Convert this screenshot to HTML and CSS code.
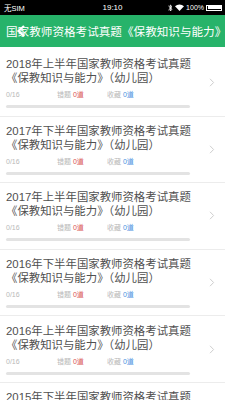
FILE: index.html
```html
<!DOCTYPE html>
<html lang="zh">
<head>
<meta charset="utf-8">
<link rel="stylesheet" href="styles.css">
</head>
<body>
<div class="status">
  <span class="carrier">无SIM</span>
  <span class="time">19:10</span>
  <span class="right">
    <svg class="bt" width="5" height="8" viewBox="0 0 5 8"><path d="M0.5 2 L4 5.3 L2.3 7 L2.3 1 L4 2.7 L0.5 6" fill="none" stroke="#fff" stroke-width="0.9"/></svg>
    <svg class="wifi" width="9" height="7" viewBox="0 0 9 7"><path d="M4.5 7 L0 2.2 A6.5 6.5 0 0 1 9 2.2 Z" fill="#fff"/></svg>
    <span class="pct">100%</span>
    <span class="battery"><span class="fill"></span></span>
  </span>
</div>
<div class="header">
  <span class="htitle">国家教师资格考试真题《保教知识与能力》</span>
  <svg class="back" width="10" height="12" viewBox="0 0 10 12"><path d="M8 1 L2.5 6 L8 11" fill="none" stroke="#fff" stroke-width="2.2"/></svg>
</div>
<div class="list">
  <div class="item">
    <div class="body">
      <div class="title">2018年上半年国家教师资格考试真题《保教知识与能力》（幼儿园）</div>
      <div class="stats"><span class="prog">0/16</span><span class="st">错题 <em class="red">0道</em></span><span class="st">收藏 <em class="blue">0道</em></span></div>
      <div class="bar"></div>
    </div>
    <svg class="chev" width="6" height="9" viewBox="0 0 6 9"><path d="M1 0.8 L4.6 4.5 L1 8.2" fill="none" stroke="#c8c8c8" stroke-width="0.9"/></svg>
  </div>
  <div class="item">
    <div class="body">
      <div class="title">2017年下半年国家教师资格考试真题《保教知识与能力》（幼儿园）</div>
      <div class="stats"><span class="prog">0/16</span><span class="st">错题 <em class="red">0道</em></span><span class="st">收藏 <em class="blue">0道</em></span></div>
      <div class="bar"></div>
    </div>
    <svg class="chev" width="6" height="9" viewBox="0 0 6 9"><path d="M1 0.8 L4.6 4.5 L1 8.2" fill="none" stroke="#c8c8c8" stroke-width="0.9"/></svg>
  </div>
  <div class="item">
    <div class="body">
      <div class="title">2017年上半年国家教师资格考试真题《保教知识与能力》（幼儿园）</div>
      <div class="stats"><span class="prog">0/16</span><span class="st">错题 <em class="red">0道</em></span><span class="st">收藏 <em class="blue">0道</em></span></div>
      <div class="bar"></div>
    </div>
    <svg class="chev" width="6" height="9" viewBox="0 0 6 9"><path d="M1 0.8 L4.6 4.5 L1 8.2" fill="none" stroke="#c8c8c8" stroke-width="0.9"/></svg>
  </div>
  <div class="item">
    <div class="body">
      <div class="title">2016年下半年国家教师资格考试真题《保教知识与能力》（幼儿园）</div>
      <div class="stats"><span class="prog">0/16</span><span class="st">错题 <em class="red">0道</em></span><span class="st">收藏 <em class="blue">0道</em></span></div>
      <div class="bar"></div>
    </div>
    <svg class="chev" width="6" height="9" viewBox="0 0 6 9"><path d="M1 0.8 L4.6 4.5 L1 8.2" fill="none" stroke="#c8c8c8" stroke-width="0.9"/></svg>
  </div>
  <div class="item">
    <div class="body">
      <div class="title">2016年上半年国家教师资格考试真题《保教知识与能力》（幼儿园）</div>
      <div class="stats"><span class="prog">0/16</span><span class="st">错题 <em class="red">0道</em></span><span class="st">收藏 <em class="blue">0道</em></span></div>
      <div class="bar"></div>
    </div>
    <svg class="chev" width="6" height="9" viewBox="0 0 6 9"><path d="M1 0.8 L4.6 4.5 L1 8.2" fill="none" stroke="#c8c8c8" stroke-width="0.9"/></svg>
  </div>
  <div class="item">
    <div class="body">
      <div class="title">2015年下半年国家教师资格考试真题《保教知识与能力》（幼儿园）</div>
      <div class="stats"><span class="prog">0/16</span><span class="st">错题 <em class="red">0道</em></span><span class="st">收藏 <em class="blue">0道</em></span></div>
      <div class="bar"></div>
    </div>
    <svg class="chev" width="6" height="9" viewBox="0 0 6 9"><path d="M1 0.8 L4.6 4.5 L1 8.2" fill="none" stroke="#c8c8c8" stroke-width="0.9"/></svg>
  </div>
</div>
</body>
</html>
```
FILE: styles.css
```css
* { box-sizing: border-box; }
html, body { margin: 0; padding: 0; }
body {
  width: 225px;
  height: 400px;
  overflow: hidden;
  background: #fff;
  font-family: "Liberation Sans", "Noto Sans CJK SC", sans-serif;
}
.status {
  height: 15px;
  background: #000;
  color: #fff;
  display: flex;
  align-items: center;
  justify-content: space-between;
  padding: 0 3px 0 4px;
  font-size: 7.5px;
  position: relative;
}
.time {
  position: absolute;
  left: 0;
  right: 0;
  text-align: center;
  font-size: 8px;
}
.right {
  display: flex;
  align-items: center;
  gap: 2px;
}
.pct { font-size: 7px; }
.battery {
  width: 16px;
  height: 6px;
  border: 0.8px solid #fff;
  padding: 0.5px;
  display: flex;
}
.battery .fill { flex: 1; background: #fff; }
.header {
  height: 32px;
  background: #27b36a;
  display: flex;
  align-items: center;
  padding-left: 6px;
  position: relative;
}
.htitle {
  color: #fff;
  font-size: 11.6px;
  white-space: nowrap;
  font-family: "Noto Sans CJK SC", sans-serif;
}
.back {
  position: absolute;
  left: 16px;
  top: 10px;
}
.list { padding-top: 3px; }
.item {
  display: flex;
  align-items: center;
  height: 66.6px;
  border-bottom: 1px solid #ececec;
  padding: 0 0 0 6px;
}
.body { width: 185px; }
.title {
  font-size: 11.4px;
  line-height: 14px;
  color: #505050;
}
.stats {
  display: flex;
  font-size: 7px;
  line-height: 12px;
  margin-top: 4px;
  color: #b8b8b8;
}
.prog { width: 51px; }
.st { width: 50px; }
.stats em { font-style: normal; }
.red { color: #d9534f; }
.blue { color: #4a8fe0; }
.bar {
  margin-top: 4px;
  height: 3px;
  width: 184px;
  border-radius: 2px;
  background: #e3e3e3;
}
.chev { margin-left: 18px; }
```
